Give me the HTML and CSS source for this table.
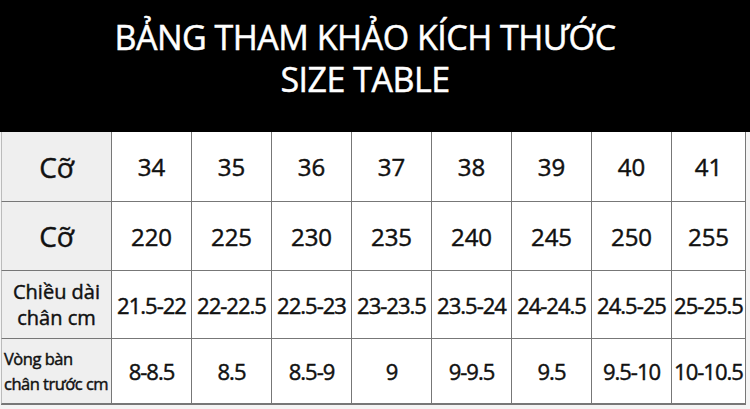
FILE: index.html
```html
<!DOCTYPE html>
<html lang="vi">
<head>
<meta charset="utf-8">
<title>Size Table</title>
<link rel="stylesheet" href="styles.css">
</head>
<body>
<div class="page">
  <header class="header">
    <h1 class="title">BẢNG THAM KHẢO KÍCH THƯỚC<br>SIZE TABLE</h1>
  </header>
  <div class="grid">
    <div class="cell label big">Cỡ</div>
    <div class="cell num">34</div>
    <div class="cell num">35</div>
    <div class="cell num">36</div>
    <div class="cell num">37</div>
    <div class="cell num">38</div>
    <div class="cell num">39</div>
    <div class="cell num">40</div>
    <div class="cell num last">41</div>

    <div class="cell label big">Cỡ</div>
    <div class="cell num">220</div>
    <div class="cell num">225</div>
    <div class="cell num">230</div>
    <div class="cell num">235</div>
    <div class="cell num">240</div>
    <div class="cell num">245</div>
    <div class="cell num">250</div>
    <div class="cell num last">255</div>

    <div class="cell label mid">Chiều dài<br>chân cm</div>
    <div class="cell range">21.5-22</div>
    <div class="cell range">22-22.5</div>
    <div class="cell range">22.5-23</div>
    <div class="cell range">23-23.5</div>
    <div class="cell range">23.5-24</div>
    <div class="cell range">24-24.5</div>
    <div class="cell range">24.5-25</div>
    <div class="cell range last">25-25.5</div>

    <div class="cell label small">Vòng bàn<br>chân trước cm</div>
    <div class="cell range">8-8.5</div>
    <div class="cell range">8.5</div>
    <div class="cell range">8.5-9</div>
    <div class="cell range">9</div>
    <div class="cell range">9-9.5</div>
    <div class="cell range">9.5</div>
    <div class="cell range">9.5-10</div>
    <div class="cell range last">10-10.5</div>
  </div>
</div>
</body>
</html>
```
FILE: styles.css
```css
html, body {
  margin: 0;
  padding: 0;
  background: #ffffff;
}
.page {
  width: 750px;
  height: 409px;
  overflow: hidden;
  font-family: "Open Sans", "Liberation Sans", sans-serif;
  font-weight: 400;
  color: #111;
  background: #f4f4f4;
  -webkit-text-stroke: 0.45px currentColor;
}
.header {
  height: 132px;
  background: #000;
  display: flex;
  justify-content: center;
  padding-right: 20px;
  box-sizing: border-box;
}
.title {
  margin: 0;
  padding-top: 16px;
  color: #fff;
  font-weight: 400;
  font-size: 34px;
  line-height: 42px;
  letter-spacing: -0.5px;
  text-align: center;
  -webkit-text-stroke: 0.5px #fff;
}
.grid {
  display: grid;
  grid-template-columns: 110px repeat(7, 80px) 75px;
  grid-template-rows: 70px 69px 68px 65px;
  margin-left: 1px;
  width: 745px;
  background: #fff;
  border-bottom: 1px solid #777;
}
.cell {
  display: flex;
  align-items: center;
  justify-content: center;
  border-left: 1px solid #777;
  border-bottom: 1px solid #777;
  background: #fff;
  text-align: center;
}
.cell.last {
  border-right: 1px solid #777;
}
.label {
  background: #efefef;
  border-left: 1px solid #bbb;
}
.big {
  font-size: 28px;
}
.mid {
  font-size: 20px;
  line-height: 26px;
}
.small {
  font-size: 16.5px;
  line-height: 25px;
  justify-content: flex-start;
  text-align: left;
  padding-left: 2px;
  letter-spacing: -0.5px;
  white-space: nowrap;
}
.num {
  font-size: 24px;
}
.range {
  font-size: 22px;
  letter-spacing: -1px;
  white-space: nowrap;
}
```
